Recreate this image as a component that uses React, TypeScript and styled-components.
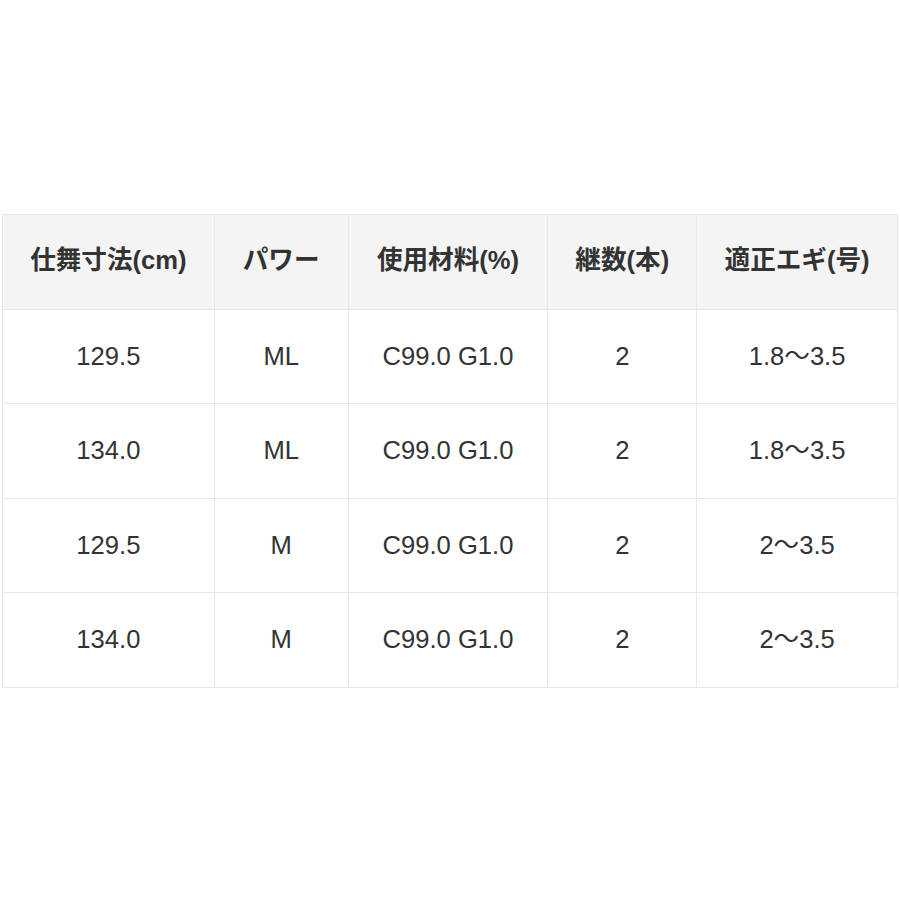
import styled, { createGlobalStyle } from "styled-components";

const GlobalStyle = createGlobalStyle`
  body {
    margin: 0;
    background: #fff;
    font-family: "Liberation Sans", "Noto Sans CJK JP", sans-serif;
    color: #333;
  }
`;

const Page = styled.div`
  padding: 214px 2px 0 2px;
`;

const SpecTable = styled.table`
  border-collapse: collapse;
  table-layout: fixed;
`;

const HeadCell = styled.th<{ $w: number }>`
  width: ${({ $w }) => $w}px;
  height: 91.6px;
  padding: 0 0 2px;
  background: #f4f4f4;
  border: 1px solid #e8e8e8;
  font-size: 25.6px;
  font-weight: 700;
  line-height: 1;
  text-align: center;
  color: #333;
`;

const Cell = styled.td`
  height: 93.6px;
  padding: 0;
  border: 1px solid #e8e8e8;
  font-size: 25.6px;
  line-height: 1;
  text-align: center;
  color: #333;
`;

const columns = [
  { label: "仕舞寸法(cm)", w: 211 },
  { label: "パワー", w: 133 },
  { label: "使用材料(%)", w: 199 },
  { label: "継数(本)", w: 148 },
  { label: "適正エギ(号)", w: 200 },
];

const rows = [
  ["129.5", "ML", "C99.0 G1.0", "2", "1.8〜3.5"],
  ["134.0", "ML", "C99.0 G1.0", "2", "1.8〜3.5"],
  ["129.5", "M", "C99.0 G1.0", "2", "2〜3.5"],
  ["134.0", "M", "C99.0 G1.0", "2", "2〜3.5"],
];

export default function App() {
  return (
    <>
      <GlobalStyle />
      <Page>
        <SpecTable>
          <thead>
            <tr>
              {columns.map((c) => (
                <HeadCell key={c.label} $w={c.w}>
                  {c.label}
                </HeadCell>
              ))}
            </tr>
          </thead>
          <tbody>
            {rows.map((r, i) => (
              <tr key={i}>
                {r.map((v, j) => (
                  <Cell key={j}>{v}</Cell>
                ))}
              </tr>
            ))}
          </tbody>
        </SpecTable>
      </Page>
    </>
  );
}
